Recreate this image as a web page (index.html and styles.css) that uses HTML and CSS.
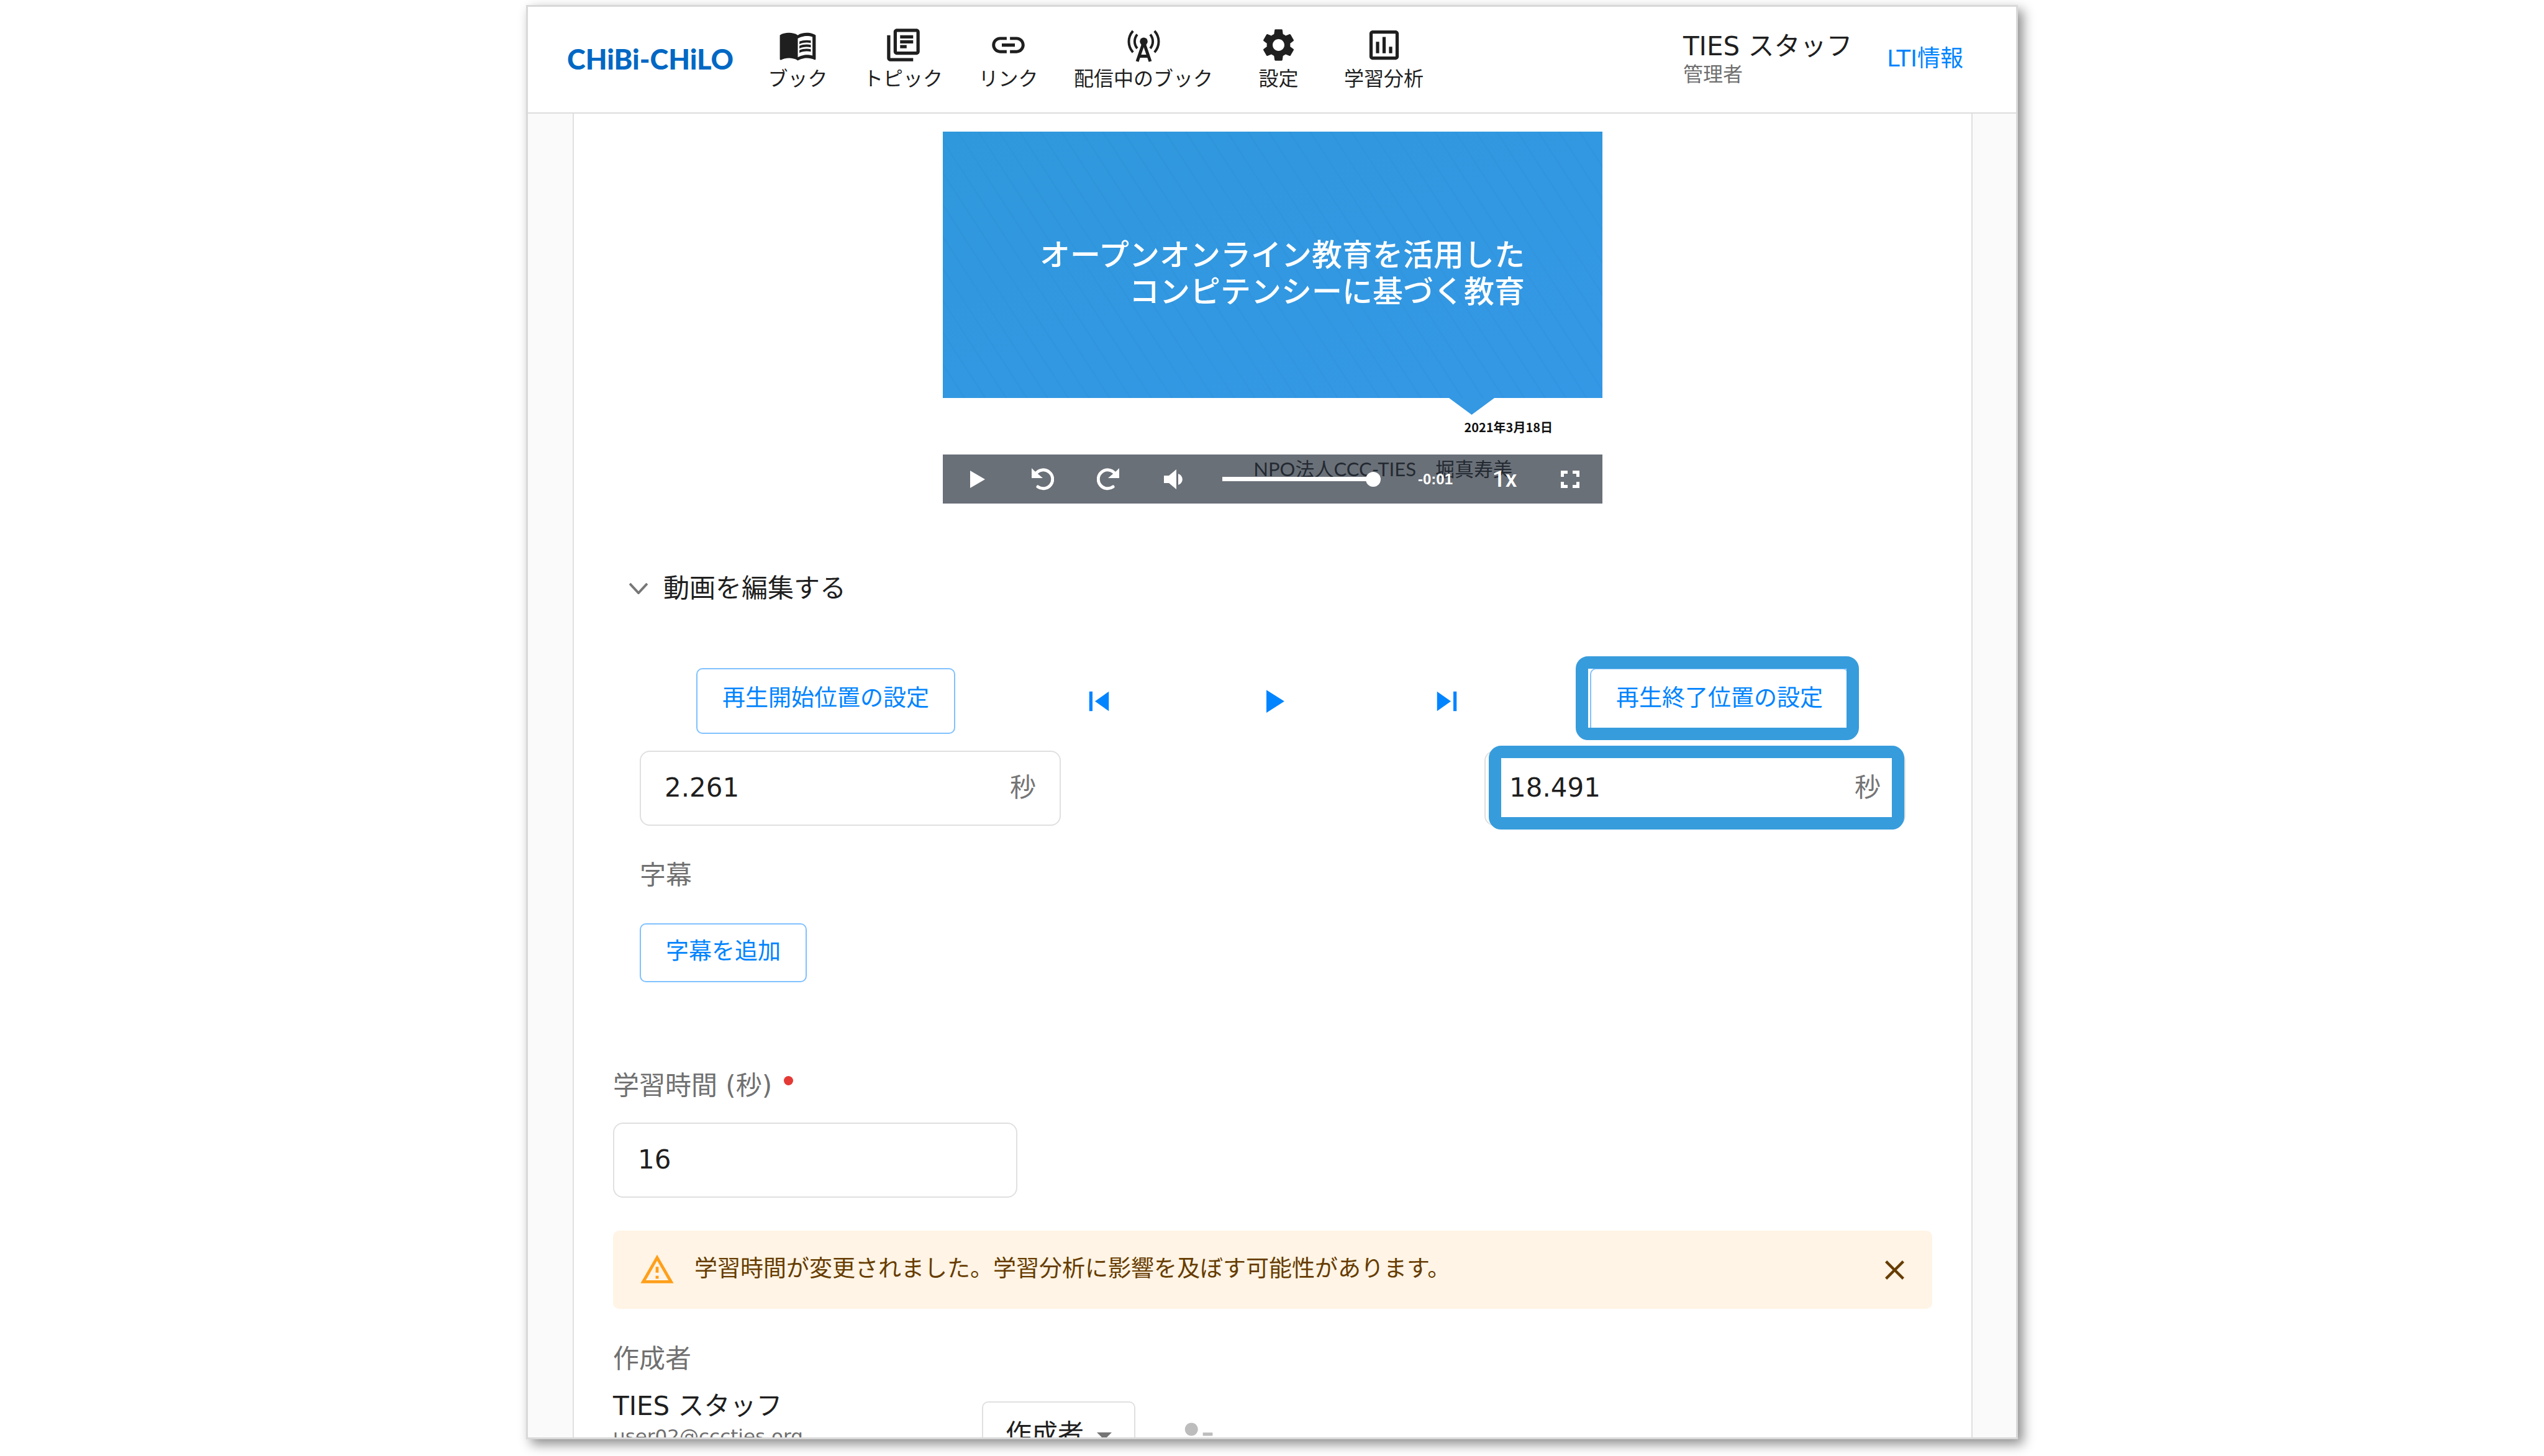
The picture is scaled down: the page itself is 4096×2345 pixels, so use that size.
FILE: index.html
```html
<!DOCTYPE html>
<html lang="ja">
<head>
<meta charset="utf-8">
<meta name="viewport" content="width=device-width, initial-scale=1">
<title>CHiBi-CHiLO</title>
<link rel="stylesheet" href="styles.css">
</head>
<body>
<div class="window">
  <header class="header">
    <a class="logo" href="#">CHiBi-CHiLO</a>
    <nav class="nav">
      <a class="nav-item" href="#">
        <svg class="icon" viewBox="0 0 24 24"><path d="M21 5c-1.11-.35-2.33-.5-3.5-.5-1.95 0-4.05.4-5.5 1.5-1.45-1.1-3.55-1.5-5.5-1.5S2.45 4.9 1 6v14.65c0 .25.25.5.5.5.1 0 .15-.05.25-.05C3.1 20.45 5.05 20 6.5 20c1.95 0 4.05.4 5.5 1.5 1.35-.85 3.8-1.5 5.5-1.5 1.65 0 3.35.3 4.75 1.05.1.05.15.05.25.05.25 0 .5-.25.5-.5V6c-.6-.45-1.25-.75-2-1zm0 13.5c-1.1-.35-2.3-.5-3.5-.5-1.7 0-4.15.65-5.5 1.5V8c1.35-.85 3.8-1.5 5.5-1.5 1.2 0 2.4.15 3.5.5v11.5z"/><path d="M17.5 10.5c.88 0 1.73.09 2.5.26V9.24c-.79-.15-1.64-.24-2.5-.24-1.7 0-3.24.29-4.5.83v1.66c1.13-.64 2.7-.99 4.5-.99zM13 12.49v1.66c1.13-.64 2.7-.99 4.5-.99.88 0 1.73.09 2.5.26V11.9c-.79-.15-1.64-.24-2.5-.24-1.7 0-3.24.3-4.5.83zM17.5 14.33c-1.7 0-3.24.29-4.5.83v1.66c1.13-.64 2.7-.99 4.5-.99.88 0 1.73.09 2.5.26v-1.52c-.79-.16-1.64-.24-2.5-.24z"/></svg>
        <span>ブック</span>
      </a>
      <a class="nav-item" href="#">
        <svg class="icon" viewBox="0 0 24 24"><path d="M4 6H2v14c0 1.1.9 2 2 2h14v-2H4V6zm16-4H8c-1.1 0-2 .9-2 2v12c0 1.1.9 2 2 2h12c1.1 0 2-.9 2-2V4c0-1.1-.9-2-2-2zm0 14H8V4h12v12zM10 9h8v2h-8zm0 3h4v2h-4zm0-6h8v2h-8z"/></svg>
        <span>トピック</span>
      </a>
      <a class="nav-item" href="#">
        <svg class="icon" viewBox="0 0 24 24"><path d="M3.9 12c0-1.71 1.39-3.1 3.1-3.1h4V7H7c-2.76 0-5 2.24-5 5s2.24 5 5 5h4v-1.9H7c-1.71 0-3.1-1.39-3.1-3.1zM8 13h8v-2H8v2zm9-6h-4v1.9h4c1.71 0 3.1 1.39 3.1 3.1s-1.39 3.1-3.1 3.1h-4V17h4c2.76 0 5-2.24 5-5s-2.24-5-5-5z"/></svg>
        <span>リンク</span>
      </a>
      <a class="nav-item" href="#">
        <svg class="icon" viewBox="0 0 24 24"><circle cx="12" cy="9.8" r="2.4"/><path class="stroke" d="M5.4 3.4C2 7.2 2 12.6 5.4 16.5M18.6 3.4c3.4 3.8 3.4 9.2 0 13.1M8 5.5c-2.1 2.6-2.1 6 0 8.6M16 5.5c2.1 2.6 2.1 6 0 8.6"/><path class="stroke leg" d="M11.8 11 8 22.1M12.2 11 16 22.1M9.500 18.900h5"/></svg>
        <span>配信中のブック</span>
      </a>
      <a class="nav-item" href="#">
        <svg class="icon" viewBox="0 0 24 24"><path d="M19.14 12.94c.04-.3.06-.61.06-.94 0-.32-.02-.64-.07-.94l2.03-1.58c.18-.14.23-.41.12-.61l-1.92-3.32c-.12-.22-.37-.29-.59-.22l-2.39.96c-.5-.38-1.03-.7-1.62-.94l-.36-2.54c-.04-.24-.24-.41-.48-.41h-3.84c-.24 0-.43.17-.47.41l-.36 2.54c-.59.24-1.13.57-1.62.94l-2.39-.96c-.22-.08-.47 0-.59.22L2.74 8.87c-.12.21-.08.47.12.61l2.03 1.58c-.05.3-.09.63-.09.94s.02.64.07.94l-2.03 1.58c-.18.14-.23.41-.12.61l1.92 3.32c.12.22.37.29.59.22l2.39-.96c.5.38 1.03.7 1.62.94l.36 2.54c.05.24.24.41.48.41h3.84c.24 0 .44-.17.47-.41l.36-2.54c.59-.24 1.13-.56 1.62-.94l2.39.96c.22.08.47 0 .59-.22l1.92-3.32c.12-.22.07-.47-.12-.61l-2.01-1.58zM12 15.6c-1.98 0-3.6-1.62-3.6-3.6s1.62-3.6 3.6-3.6 3.6 1.62 3.6 3.6-1.62 3.6-3.6 3.6z"/></svg>
        <span>設定</span>
      </a>
      <a class="nav-item" href="#">
        <svg class="icon" viewBox="0 0 24 24"><path d="M19 3H5c-1.1 0-2 .9-2 2v14c0 1.1.9 2 2 2h14c1.1 0 2-.9 2-2V5c0-1.1-.9-2-2-2zm0 16H5V5h14v14zM7 10h2v7H7zm4-3h2v10h-2zm4 6h2v4h-2z"/></svg>
        <span>学習分析</span>
      </a>
    </nav>
    <div class="user">
      <div class="user-name">TIES スタッフ</div>
      <div class="user-role">管理者</div>
    </div>
    <a class="lti" href="#">LTI情報</a>
  </header>

  <main class="main">
    <form class="card">
      <section class="player">
        <div class="slide">
          <p class="slide-title">オープンオンライン教育を活用した<br>コンピテンシーに基づく教育</p>
        </div>
        <svg class="slide-mark" viewBox="0 0 73 27"><path d="M0 0h73L36.5 27z"/></svg>
        <p class="slide-date">2021年3月18日</p>
        <p class="slide-author">NPO法人CCC-TIES　堀真寿美</p>
        <div class="controls">
          <button type="button" class="control" aria-label="再生"><svg width="24" height="28" viewBox="0 0 24 28"><path d="M0 0v28l24-14z"/></svg></button>
          <button type="button" class="control" aria-label="戻る"><svg width="36" height="36" viewBox="0 0 36 36"><path d="M0 0v16h18L4 4z"/><path class="arc" d="M7 8.500A15 15 0 1 1 10 30"/></svg></button>
          <button type="button" class="control" aria-label="進む"><svg width="36" height="36" viewBox="0 0 36 36"><path d="M36 0v16H18L32 4z"/><path class="arc" d="M29 8.500A15 15 0 1 0 26 30"/></svg></button>
          <button type="button" class="control" aria-label="音量"><svg width="30" height="32" viewBox="0 0 30 32"><path d="M0 10v12h8l12 10V0L8 10zM23 7v18c9-3 9-15 0-18z"/></svg></button>
          <div class="progress"><div class="knob"></div></div>
          <span class="time">-0:01</span>
          <button type="button" class="control rate">1x</button>
          <button type="button" class="control" aria-label="全画面"><svg width="30" height="28" viewBox="0 0 30 28"><path d="M0 10V0h11v5H5v5zM19 0h11v10h-5V5h-6zM0 18h5v5h6v5H0zM25 18h5v10H19v-5h6z"/></svg></button>
        </div>
      </section>

      <h2 class="section-title">
        <svg class="chevron" viewBox="0 0 30 18"><path d="M1 1l14 15L29 1"/></svg>
        動画を編集する
      </h2>

      <section class="editor">
        <div class="trim-row">
          <button type="button" class="button tall">再生開始位置の設定</button>
          <button type="button" class="icon-button" aria-label="先頭へ"><svg class="icon" viewBox="0 0 24 24"><path d="M6 6h2v12H6zm3.5 6l8.5 6V6z"/></svg></button>
          <button type="button" class="icon-button" aria-label="再生"><svg class="icon" viewBox="0 0 24 24"><path d="M8 5v14l11-7z"/></svg></button>
          <button type="button" class="icon-button" aria-label="末尾へ"><svg class="icon" viewBox="0 0 24 24"><path d="M6 18l8.5-6L6 6v12zM16 6v12h2V6h-2z"/></svg></button>
          <div class="marked marked-button">
            <button type="button" class="button tall">再生終了位置の設定</button>
          </div>
        </div>
        <div class="time-row">
          <div class="field wide">
            <input type="text" id="start" value="2.261" aria-label="再生開始位置">
            <label for="start">秒</label>
          </div>
          <div class="marked marked-field">
            <div class="field wide">
              <input type="text" id="stop" value="18.491" aria-label="再生終了位置">
              <label for="stop">秒</label>
            </div>
          </div>
        </div>
        <p class="label caption-label">字幕</p>
        <button type="button" class="button">字幕を追加</button>
      </section>

      <label class="label duration-label" for="duration">学習時間 (秒)<span class="required"></span></label>
      <div class="field">
        <input type="text" id="duration" value="16">
      </div>

      <div class="alert" role="alert">
        <svg class="alert-icon" viewBox="0 0 24 24"><path d="M12 5.99L19.53 19H4.47L12 5.99M12 2L1 21h22L12 2zm1 14h-2v2h2v-2zm0-6h-2v4h2v-4z"/></svg>
        <span class="alert-text">学習時間が変更されました。学習分析に影響を及ぼす可能性があります。</span>
        <button type="button" class="close" aria-label="閉じる"><svg viewBox="0 0 24 24"><path d="M19 6.41L17.59 5 12 10.59 6.41 5 5 6.41 10.59 12 5 17.59 6.41 19 12 13.41 17.59 19 19 17.59 13.41 12z"/></svg></button>
      </div>

      <p class="label author-label">作成者</p>
      <div class="author">
        <div class="author-info">
          <div class="author-name">TIES スタッフ</div>
          <div class="author-mail">user02@cccties.org</div>
        </div>
        <div class="role">
          <select aria-label="役割"><option>作成者</option></select>
          <svg class="caret" viewBox="0 0 24 12"><path d="M0 0h24L12 12z"/></svg>
        </div>
        <button type="button" class="remove" aria-label="削除" disabled><svg class="icon" viewBox="0 0 24 24"><path d="M14 8c0-2.21-1.79-4-4-4S6 5.79 6 8s1.79 4 4 4 4-1.79 4-4zm3 2v2h6v-2h-6zM2 18v2h16v-2c0-2.66-5.33-4-8-4s-8 1.34-8 4z"/></svg></button>
      </div>
    </form>
  </main>
</div>
</body>
</html>
```
FILE: styles.css
```css
* {
  box-sizing: border-box;
}

body {
  height: 100vh;
  margin: 0;
  padding: 8px 0 27px;
  background: #fff;
  color: #1f1f1f;
  font: 42px/56px "DejaVu Sans", "Noto Sans CJK JP", sans-serif;
}

p,
h2 {
  margin: 0;
  font-weight: 400;
}

a {
  color: inherit;
  text-decoration: none;
}

button,
input,
select {
  margin: 0;
  padding: 0;
  border: 0;
  background: none;
  color: inherit;
  font: inherit;
}

svg {
  display: block;
  flex: none;
  fill: currentColor;
}

.icon {
  width: 63px;
  height: 63px;
}

.window {
  display: flex;
  flex-direction: column;
  max-width: 2402px;
  height: 100%;
  margin: 0 auto;
  overflow: hidden;
  border: 3px solid #d9d9d9;
  background: #fafafa;
  box-shadow: 8px 8px 18px rgba(0, 0, 0, .45);
}

/* Header */

.header {
  display: flex;
  flex: none;
  align-items: center;
  height: 172px;
  padding: 0 85px 3px 63px;
  border-bottom: 2px solid #dcdcdc;
  background: #fff;
}

.logo {
  width: 287px;
  color: #0068c4;
  font: 900 45px/56px Lato, sans-serif;
}

.nav {
  display: flex;
}

.nav-item {
  display: flex;
  flex-direction: column;
  gap: 2px;
  align-items: center;
  min-width: 169px;
  padding: 0 21px;
  font-size: 32px;
  line-height: 42px;
  white-space: nowrap;
}

.stroke {
  fill: none;
  stroke: currentColor;
  stroke-width: 1.5;
}

.leg {
  stroke-width: 1.9;
}

.user {
  width: 285px;
  margin: 0 43px 0 auto;
  white-space: nowrap;
}

.user-name {
  line-height: 50px;
}

.user-role {
  color: #6f6f6f;
  font-size: 32px;
  line-height: 40px;
}

.lti {
  color: #0084ff;
  font-size: 37px;
  white-space: nowrap;
}

/* Content */

.main {
  flex: none;
  padding: 0 70px 0 72px;
}

.card {
  padding: 29px 63px;
  border: solid #e0e0e0;
  border-width: 0 2px;
  background: #fff;
}

/* Video player */

.player {
  position: relative;
  display: flex;
  flex-direction: column;
  align-items: flex-end;
  width: 1062px;
  max-width: 100%;
  height: 599px;
  margin: 0 auto;
  overflow: hidden;
}

.slide {
  width: 100%;
  padding: 165px 125px 146px 0;
  background:
    repeating-linear-gradient(57deg, rgba(0, 60, 120, .03) 0 3px, transparent 3px 28px),
    linear-gradient(160deg, #2f98dc, #3598e6);
}

.slide-title {
  color: #fff;
  font: 500 49px/59px "Noto Sans CJK JP", sans-serif;
  text-align: right;
}

.slide-mark {
  width: 73px;
  height: 27px;
  margin-right: 174px;
  fill: #3498e3;
}

.slide-date {
  margin: 8px 80px 0 0;
  color: #111;
  font: 700 20px/24px "Noto Sans CJK JP", sans-serif;
}

.slide-author {
  margin: 35px 145px 0 0;
  color: #111;
  font: 31px/40px Lato, "Noto Sans CJK JP", sans-serif;
}

.controls {
  position: absolute;
  right: 0;
  bottom: 0;
  left: 0;
  display: flex;
  align-items: center;
  height: 79px;
  padding-left: 3px;
  background: rgba(43, 51, 63, .7);
  color: #fff;
}

.control {
  display: flex;
  align-items: center;
  justify-content: center;
  width: 105px;
  height: 79px;
}

.arc {
  fill: none;
  stroke: currentColor;
  stroke-linecap: round;
  stroke-width: 5;
}

.progress {
  display: flex;
  flex: 1;
  align-items: center;
  justify-content: flex-end;
  height: 7px;
  margin: 0 41px 0 27px;
  background: #fff;
}

.knob {
  width: 24px;
  height: 24px;
  margin-right: -12px;
  border-radius: 50%;
  background: #fff;
}

.time {
  width: 118px;
  font: 700 24px/32px "Liberation Sans", sans-serif;
  text-align: center;
}

.rate {
  font: 500 37px/40px Roboto, sans-serif;
}

/* Video editing */

.section-title {
  display: flex;
  gap: 25px;
  align-items: center;
  margin: 109px 0 100px;
  padding-left: 26px;
  font-size: 42px;
}

.chevron {
  width: 30px;
  height: 18px;
  fill: none;
  stroke: #777;
  stroke-width: 4;
}

.editor {
  padding: 0 43px;
}

.trim-row {
  display: flex;
  align-items: center;
  justify-content: space-around;
}

.button {
  height: 95px;
  padding: 0 40px 4px;
  border: 2px solid #80c1ff;
  border-radius: 10px;
  color: #0084ff;
  font-size: 37px;
  white-space: nowrap;
}

.tall {
  display: block;
  height: 106px;
  padding-bottom: 8px;
}

.icon-button {
  display: flex;
  align-items: center;
  justify-content: center;
  width: 98px;
  height: 98px;
  color: #0084ff;
}

.time-row {
  display: flex;
  justify-content: space-between;
  margin-top: 27px;
}

.field {
  display: flex;
  align-items: center;
  width: 651px;
  height: 121px;
  padding: 0 38px 2px;
  border: 2px solid #e0e0e0;
  border-radius: 16px;
}

.wide {
  width: 678px;
}

.field input {
  flex: 1;
  min-width: 0;
  height: 100%;
}

.field label {
  color: #757575;
}

/* Highlight frame drawn over a control */

.marked {
  position: relative;
}

.marked::after {
  position: absolute;
  border: 20px solid #379cdc;
  border-radius: 20px;
  content: "";
  pointer-events: none;
}

.marked-button::after {
  inset: -19px -16px -10px -23px;
}

.marked-field::after {
  inset: -8px 2px -6px 7px;
}

.label {
  color: #707070;
}

.caption-label {
  margin: 52px 0 49px;
}

.duration-label {
  display: flex;
  gap: 19px;
  margin: 139px 0 31px;
}

.required {
  width: 15px;
  height: 15px;
  margin-top: 12px;
  border-radius: 50%;
  background: #e53935;
}

/* Alert */

.alert {
  display: flex;
  align-items: center;
  height: 126px;
  margin-top: 53px;
  padding: 0 34px 0 42px;
  border-radius: 10px;
  background: #fff4e5;
  color: #663c00;
  font-size: 37px;
}

.alert-icon {
  width: 58px;
  height: 58px;
  color: #ff9f1a;
}

.alert-text {
  flex: 1;
  padding: 0 0 2px 31px;
}

.close svg {
  width: 53px;
  height: 53px;
}

/* Author */

.author-label {
  margin: 53px 0 20px;
}

.author {
  display: flex;
  align-items: flex-start;
}

.author-info {
  width: 594px;
}

.author-mail {
  color: #707070;
  font-size: 31px;
  line-height: 40px;
}

.role {
  position: relative;
  width: 247px;
  margin: 20px 64px 0 0;
}

.role select {
  width: 100%;
  height: 105px;
  padding-left: 36px;
  border: 2px solid #e0e0e0;
  border-radius: 10px;
  appearance: none;
}

.caret {
  position: absolute;
  top: 50px;
  right: 38px;
  width: 24px;
  height: 12px;
  color: #757575;
  pointer-events: none;
}

.remove {
  margin-top: 44px;
  color: #bdbdbd;
}
```
